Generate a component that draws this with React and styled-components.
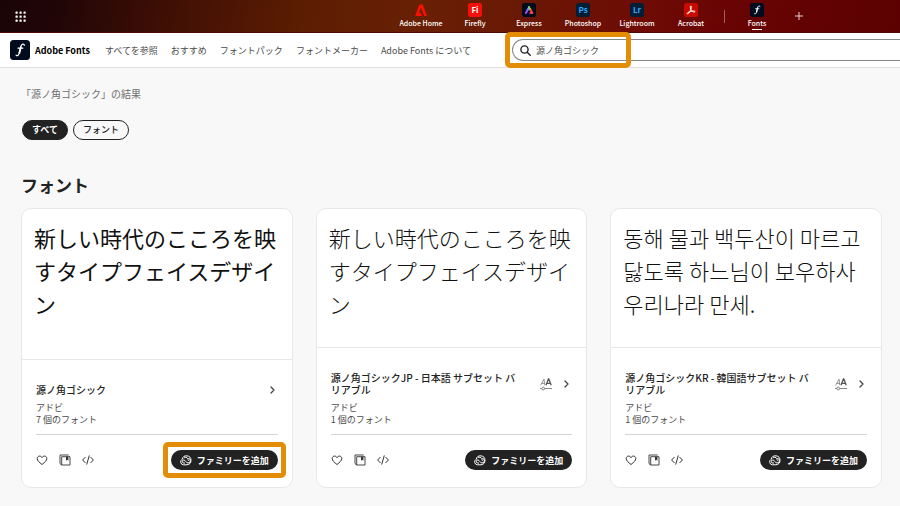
import React from 'react';
import styled, { createGlobalStyle, css } from 'styled-components';

const GlobalStyle = createGlobalStyle`
  * {
    box-sizing: border-box;
  }

  body {
    margin: 0;
    overflow-x: hidden;
    background: #f8f8f8;
    color: #222;
    font-family: 'Noto Sans CJK JP', 'Noto Sans', sans-serif;
    font-size: 9px;
  }

  button,
  input {
    margin: 0;
    font-family: inherit;
  }

  a {
    color: inherit;
    text-decoration: none;
  }
`;

const StyledTopBar = styled.header`
  display: flex;
  align-items: center;
  height: 33px;
  padding: 0 14px;
  border-bottom: 1px solid #4a0a08;
  background: linear-gradient(100deg, #1a0406 0%, #220607 7%, #421004 20%, #5c1d02 34%, #682004 46%, #6a1805 58%, #6e0c05 70%, #680303 82%, #5c0101 100%);
  color: #fff;
`;
const StyledAppList = styled.nav`
  display: flex;
  flex: 1;
  align-items: center;
  justify-content: center;
  padding-left: 287px;
`;
const StyledAppLink = styled.a`
  position: relative;
  display: flex;
  flex-direction: column;
  align-items: center;
  gap: 1px;
  width: 54px;
  height: 30px;
  padding-top: 2px;
  font-size: 7px;
  font-weight: 500;
  line-height: 10px;
  white-space: nowrap;

  svg {
    display: block;
    flex-shrink: 0;
  }

  ${({ $active }) =>
    $active &&
    css`
      &:after {
        content: '';
        position: absolute;
        bottom: 1px;
        width: 10px;
        height: 1px;
        background: #fff;
      }
    `}
`;
const StyledDivider = styled.span`
  width: 1px;
  height: 13px;
  margin: 0 5px 0 6px;
  background: #a06058;
`;
const StyledIconButton = styled.button`
  display: flex;
  align-items: center;
  justify-content: center;
  width: 12px;
  height: 12px;
  padding: 0;
  border: 0;
  background: none;
  color: inherit;

  svg {
    flex-shrink: 0;
  }
`;
const StyledAddApp = styled(StyledIconButton)`
  margin-left: 9px;
`;

const StyledNav = styled.nav`
  display: flex;
  align-items: center;
  height: 35px;
  padding-left: 10px;
  border-bottom: 1px solid #e1e1e1;
  background: #fff;
`;
const StyledBrand = styled.a`
  display: flex;
  align-items: center;
  gap: 5px;
  width: 95px;
  color: #000;
  font-size: 9px;
  font-weight: 700;
  white-space: nowrap;
`;
const StyledNavLinks = styled.div`
  display: flex;
  gap: 13px;
  width: 400px;
  color: #4b4b4b;
  white-space: nowrap;
`;
const StyledSearch = styled.label`
  position: relative;
  display: flex;
  flex: 1;
  align-items: center;
  gap: 5px;
  height: 22px;
  padding-left: 7px;
  margin-left: 7px;
  border: 1px solid #888;
  border-right: 0;
  border-radius: 11px 0 0 11px;

  input {
    flex: 1;
    min-width: 0;
    padding: 0;
    border: 0;
    outline: 0;
    background: none;
    color: #505050;
    font-size: 9px;
  }
`;
const StyledHighlight = styled.span`
  position: absolute;
  inset: -8px;
  border: 5px solid #e38c05;
  border-radius: 5px;
  pointer-events: none;
`;
const StyledSearchHighlight = styled(StyledHighlight)`
  right: auto;
  width: 126px;
`;

const StyledMain = styled.main`
  padding: 18px 18px 18px 21px;
`;
const StyledResult = styled.p`
  margin: 0;
  color: #6e6e6e;
  font-size: 10px;
  line-height: 16px;
`;
const StyledFilters = styled.div`
  display: flex;
  gap: 5px;
  margin: 18px 1px 34px;
`;
const StyledFilter = styled.button`
  height: 20px;
  padding: 0 9px;
  border: 1px solid #222;
  border-radius: 10px;
  background: ${({ $active }) => ($active ? '#222' : 'transparent')};
  color: ${({ $active }) => ($active ? '#fff' : '#222')};
  font-size: 9px;
  font-weight: ${({ $active }) => ($active ? 700 : 500)};
  line-height: 18px;
`;
const StyledHeading = styled.h2`
  margin: 0 0 12px;
  font-size: 17px;
  font-weight: 700;
  line-height: 22px;
`;
const StyledGrid = styled.div`
  display: grid;
  grid-template-columns: repeat(3, 1fr);
  gap: 23px;
`;

const StyledCard = styled.article`
  display: flex;
  flex-direction: column;
  min-height: 280px;
  border: 1px solid #e8e8e8;
  border-radius: 10px;
  background: #fff;
`;
const StyledSample = styled.p`
  flex: 1;
  margin: 0;
  padding: 12px;
  border-bottom: 1px solid #e6e6e6;
  color: #111;
  font-family: ${({ $font }) => `'${$font}'`}, 'Noto Sans CJK JP', sans-serif;
  font-size: 22px;
  font-weight: ${({ $weight }) => $weight};
  line-height: 33px;
`;
const StyledInfo = styled.div`
  padding: 24px 14px 17px;
`;
const StyledTitleRow = styled.div`
  display: flex;
  align-items: center;
  justify-content: space-between;

  h3 {
    max-width: 190px;
    margin: 0;
    font-size: 10px;
    font-weight: 500;
    line-height: 12px;
  }
`;
const StyledTitleIcons = styled.div`
  display: flex;
  align-items: center;
  gap: 8px;
  color: #444;
`;
const StyledMeta = styled.p`
  margin: 6px 0 0;
  padding-bottom: 8px;
  border-bottom: 1px solid #d5d5d5;
  color: #4b4b4b;
  font-size: 9px;
  line-height: 12px;
`;
const StyledActions = styled.div`
  display: flex;
  align-items: center;
  gap: 11px;
  padding-top: 15px;
  color: #333;
`;
const StyledAdd = styled.button`
  position: relative;
  display: flex;
  align-items: center;
  gap: 5px;
  height: 20px;
  margin-left: auto;
  padding: 0 9px;
  border: 0;
  border-radius: 10px;
  background: #222;
  color: #fff;
  font-size: 9px;
  font-weight: 700;
  white-space: nowrap;
`;

const FontsLogo = ({ size }) => (
  <svg width={size} height={size} viewBox="0 0 20 20" aria-hidden="true">
    <rect width="20" height="20" rx="3.5" fill="#000b1d" />
    <path
      d="M14.3 5.3c0-1.500-2.200-1.700-3.100.2-.8 1.800-1.300 5.300-2.100 8-.5 1.800-1.600 2.700-3 1.700M8 8.200h4.800"
      fill="none"
      stroke="#fff"
      strokeWidth="1.200"
      strokeLinecap="round"
    />
    <path d="M11 6.500 9.300 13.500" stroke="#fff" strokeWidth="1.700" />
  </svg>
);

const Tile = ({ bg, color, children }) => (
  <svg width="14" height="14" viewBox="0 0 14 14" aria-hidden="true">
    <rect width="14" height="14" rx="2.500" fill={bg} />
    <text x="7" y="10" fill={color} fontSize="8" fontWeight="700" textAnchor="middle">
      {children}
    </text>
  </svg>
);

const HomeLogo = () => (
  <svg width="14" height="14" viewBox="0 0 14 14" aria-hidden="true">
    <path d="M5.300 1.500h3.400L13 13h-2.800L7 4.700 5 10h2l1 3H1.200z" fill="#fa0f00" />
  </svg>
);

const ExpressLogo = () => (
  <svg width="14" height="14" viewBox="0 0 14 14" aria-hidden="true">
    <rect width="14" height="14" rx="2.500" fill="#000b1d" />
    <g fill="none" strokeWidth="2" strokeLinecap="round">
      <path d="M8.300 10h1.900" stroke="#e8338b" />
      <path d="M7 4.400 8.600 7" stroke="#ffc21a" />
      <path d="M8.600 7l1.700 3" stroke="#ff4b2b" />
      <path d="M7 4.400 5.400 7.200" stroke="#37b6ff" />
      <path d="M5.400 7.200 3.900 10" stroke="#9a4dff" />
      <path d="M7 4.300v.1" stroke="#7ed957" />
    </g>
  </svg>
);

const AcrobatLogo = () => (
  <svg width="14" height="14" viewBox="0 0 14 14" aria-hidden="true">
    <rect width="14" height="14" rx="2.500" fill="#c80a00" />
    <path
      d="M6.600 3c1.200-.5.900 2.300-.1 4.300-.9 2-2.500 4.100-3.200 3.500-.6-.8 1.600-2 3.700-2.500 2-.5 4.100-.5 4 .4-.2 1-2.200.2-3.400-1.200C6.300 6.200 5.900 3.500 6.600 3z"
      fill="none"
      stroke="#fff"
      strokeWidth="1"
    />
  </svg>
);

const GridIcon = () => (
  <svg width="11" height="11" viewBox="0 0 11 11" fill="#fff" aria-hidden="true">
    {[0, 4, 8].map(y =>
      [0, 4, 8].map(x => (
        <rect key={`${x}${y}`} x={x + 0.5} y={y + 0.5} width="2.200" height="2.200" rx="0.500" />
      )),
    )}
  </svg>
);

const SearchIcon = () => (
  <svg
    width="11"
    height="11"
    viewBox="0 0 11 11"
    fill="none"
    stroke="#222"
    strokeWidth="1.400"
    strokeLinecap="round"
    aria-hidden="true"
  >
    <circle cx="4.500" cy="4.500" r="3.600" />
    <path d="m7.200 7.200 3 3" />
  </svg>
);

const PlusIcon = () => (
  <svg width="8" height="8" viewBox="0 0 8 8" stroke="#e6d0d0" aria-hidden="true">
    <path d="M4 0v8M0 4h8" />
  </svg>
);

const HeartIcon = () => (
  <svg width="12" height="12" viewBox="0 0 12 12" fill="none" stroke="currentColor" strokeLinejoin="round" aria-hidden="true">
    <path d="M6 10.500C3.200 8.300 1.200 6.500 1.200 4.500 1.200 1.900 4.700 1.100 6 3.600c1.300-2.500 4.800-1.700 4.800.9 0 2-2 3.800-4.800 6z" />
  </svg>
);

const LibraryIcon = () => (
  <svg width="12" height="12" viewBox="0 0 12 12" fill="none" stroke="currentColor" strokeWidth="0.900" aria-hidden="true">
    <path d="M2.700 2.700h8.300v8.300H2.700z" />
    <path d="M1 9.700V1h8.700M1 9.700l1.700 1.300" />
    <path d="M7 2.700h2.400v4L8.200 5.700 7 6.700z" fill="currentColor" stroke="none" />
  </svg>
);

const CodeIcon = () => (
  <svg width="12" height="12" viewBox="0 0 12 12" fill="none" stroke="currentColor" strokeLinecap="round" strokeLinejoin="round" aria-hidden="true">
    <path d="M3.200 3.300.6 6l2.600 2.700M8.800 3.300 11.400 6 8.800 8.700M7.200 1.800 4.800 10.200" strokeWidth="1" />
  </svg>
);

const ChevronIcon = () => (
  <svg
    width="12"
    height="12"
    viewBox="0 0 12 12"
    fill="none"
    stroke="currentColor"
    strokeWidth="1.300"
    strokeLinecap="round"
    strokeLinejoin="round"
    aria-hidden="true"
  >
    <path d="m5 3 3 3-3 3" />
  </svg>
);

const VariableIcon = () => (
  <svg width="12" height="14" viewBox="0 0 12 14" fill="none" stroke="#666" aria-hidden="true">
    <path d="M.6 8.300 4 2.200l.8 6.100M1.700 6.400h2.900" strokeWidth="0.700" />
    <path d="M6 8.300 8.400 2h.4l2.400 6.300M6.900 6.400h3.500" strokeWidth="1.300" stroke="#555" />
    <path d="M0 11.500h1.600M4.800 11.500H12" stroke="#888" />
    <circle cx="3.200" cy="11.500" r="1.400" strokeWidth="0.800" />
  </svg>
);

const CloudIcon = () => (
  <svg width="12" height="12" viewBox="0 0 12 12" fill="none" stroke="currentColor" strokeWidth="1" aria-hidden="true">
    <path d="M3.500 10.800A2.900 2.900 0 0 1 2.100 5.400 4.500 4.500 0 1 1 7 10.800z" />
    <path d="M5 9H3.800a1.500 1.500 0 0 1 0-3C5.600 6 6 9 8 9a2.300 2.300 0 0 0 .3-4.600" />
    <path d="M3.800 4.300c1-1.700 3.300-1.300 3.900.3.300 1 .6 2.300 1.500 2.300" />
  </svg>
);

const apps = [
  { name: 'Adobe Home', logo: <HomeLogo /> },
  { name: 'Firefly', logo: <Tile bg="#f50f0a" color="#fff">Fi</Tile> },
  { name: 'Express', logo: <ExpressLogo /> },
  { name: 'Photoshop', logo: <Tile bg="#001e36" color="#31a8ff">Ps</Tile> },
  { name: 'Lightroom', logo: <Tile bg="#001e36" color="#31a8ff">Lr</Tile> },
  { name: 'Acrobat', logo: <AcrobatLogo /> },
];

const links = ['すべてを参照', 'おすすめ', 'フォントパック', 'フォントメーカー', 'Adobe Fonts について'];

const families = [
  {
    title: '源ノ角ゴシック',
    count: '7 個のフォント',
    sample: '新しい時代のこころを映すタイプフェイスデザイン',
    font: 'Noto Sans CJK JP',
    weight: 400,
    highlighted: true,
  },
  {
    title: '源ノ角ゴシックJP - 日本語 サブセット バリアブル',
    count: '1 個のフォント',
    sample: '新しい時代のこころを映すタイプフェイスデザイン',
    font: 'Noto Sans CJK JP',
    weight: 200,
    variable: true,
  },
  {
    title: '源ノ角ゴシックKR - 韓国語サブセット バリアブル',
    count: '1 個のフォント',
    sample: '동해 물과 백두산이 마르고 닳도록 하느님이 보우하사 우리나라 만세.',
    font: 'Noto Sans CJK KR',
    weight: 200,
    variable: true,
  },
];

const FontCard = ({ title, count, sample, font, weight, variable, highlighted }) => (
  <StyledCard>
    <StyledSample $font={font} $weight={weight}>
      {sample}
    </StyledSample>
    <StyledInfo>
      <StyledTitleRow>
        <h3>{title}</h3>
        <StyledTitleIcons>
          {variable && <VariableIcon />}
          <StyledIconButton aria-label={title}>
            <ChevronIcon />
          </StyledIconButton>
        </StyledTitleIcons>
      </StyledTitleRow>
      <StyledMeta>
        アドビ
        <br />
        {count}
      </StyledMeta>
      <StyledActions>
        <StyledIconButton aria-label="お気に入り">
          <HeartIcon />
        </StyledIconButton>
        <StyledIconButton aria-label="ライブラリ">
          <LibraryIcon />
        </StyledIconButton>
        <StyledIconButton aria-label="コード">
          <CodeIcon />
        </StyledIconButton>
        <StyledAdd>
          <CloudIcon />
          ファミリーを追加
          {highlighted && <StyledHighlight />}
        </StyledAdd>
      </StyledActions>
    </StyledInfo>
  </StyledCard>
);

const App = () => (
  <>
    <GlobalStyle />
    <StyledTopBar>
      <StyledIconButton aria-label="アプリ">
        <GridIcon />
      </StyledIconButton>
      <StyledAppList>
        {apps.map(({ name, logo }) => (
          <StyledAppLink key={name} href="#">
            {logo}
            {name}
          </StyledAppLink>
        ))}
        <StyledDivider />
        <StyledAppLink href="#" $active>
          <FontsLogo size={14} />
          Fonts
        </StyledAppLink>
        <StyledAddApp aria-label="追加">
          <PlusIcon />
        </StyledAddApp>
      </StyledAppList>
    </StyledTopBar>

    <StyledNav>
      <StyledBrand href="#">
        <FontsLogo size={20} />
        Adobe Fonts
      </StyledBrand>
      <StyledNavLinks>
        {links.map(link => (
          <a key={link} href="#">
            {link}
          </a>
        ))}
      </StyledNavLinks>
      <StyledSearch>
        <SearchIcon />
        <input type="text" aria-label="検索" defaultValue="源ノ角ゴシック" />
        <StyledSearchHighlight />
      </StyledSearch>
    </StyledNav>

    <StyledMain>
      <StyledResult>「源ノ角ゴシック」の結果</StyledResult>
      <StyledFilters>
        <StyledFilter $active>すべて</StyledFilter>
        <StyledFilter>フォント</StyledFilter>
      </StyledFilters>
      <StyledHeading>フォント</StyledHeading>
      <StyledGrid>
        {families.map(family => (
          <FontCard key={family.title} {...family} />
        ))}
      </StyledGrid>
    </StyledMain>
  </>
);

export default App;
